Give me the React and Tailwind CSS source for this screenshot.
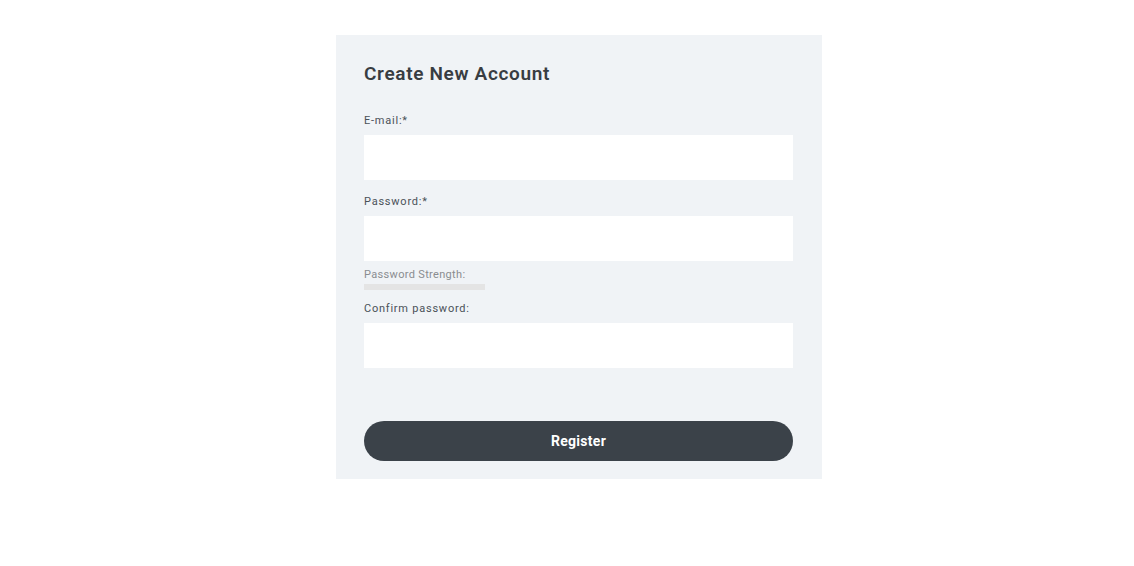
import React from 'react'

const Field = ({ label, required, children, top }) => (
  <div className={top}>
    <label className="block pt-px text-[11px] leading-4 tracking-[0.07em] text-[#4a5158]">
      {label}{required && '*'}
    </label>
    <input className="mt-[6px] block h-[45px] w-full bg-white outline-none" />
    {children}
  </div>
)

const App = () => {
  return (
    <div className="min-h-screen w-full bg-white flex justify-center pt-[35px] pl-[24px]" style={{ fontFamily: 'Roboto, "Liberation Sans", sans-serif' }}>
      <div className="w-[486px] h-[444px] bg-[#f0f3f6] pt-[27px] pl-[28px] pr-[29px] pb-[18px]">
        <h1 className="text-[19px] leading-6 font-semibold tracking-[0.035em] text-[#383d42]">Create New Account</h1>

        <Field label="E-mail:" required top="mt-[26px]" />

        <Field label="Password:" required top="mt-[13px]">
          <p className="mt-[6px] text-[11px] leading-4 tracking-[0.03em] text-[#8a8d90]">Password Strength:</p>
          <div className="mt-px h-[6px] w-[121px] bg-[#e4e4e4]" />
        </Field>

        <Field label="Confirm password:" top="mt-[10px]" />

        <button className="mt-[53px] h-[40px] w-full rounded-full bg-[#3b4249] text-[14px] font-bold tracking-[0.02em] text-white">
          Register
        </button>
      </div>
    </div>
  )
}

export default App
